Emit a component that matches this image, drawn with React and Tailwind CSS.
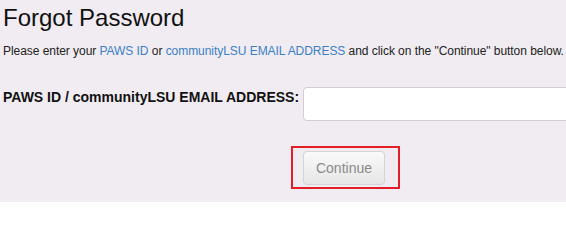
import React from 'react';

export default function App() {
  return (
    <div className="w-[566px] h-[202px] overflow-hidden bg-[#f0ecf1] text-[#222] font-['Liberation_Sans',Arial,sans-serif]">
      <div className="pl-[3px] pt-[4px]">
        <h1 className="text-[24px] leading-[28px] text-[#111]">Forgot Password</h1>
        <p className="mt-[12px] text-[12px] leading-[14px] whitespace-nowrap tracking-[-0.05px]">
          Please enter your <a href="#" className="text-[#3c7fc7]">PAWS ID</a> or{' '}
          <a href="#" className="text-[#3c7fc7]">communityLSU EMAIL ADDRESS</a> and click on the "Continue" button below.
        </p>
      </div>

      <div className="mt-[29px] flex items-start">
        <label className="w-[303px] shrink-0 pl-[3px] pt-[2px] text-[14px] leading-[16px] font-bold text-[#111]">
          PAWS ID / communityLSU EMAIL ADDRESS:
        </label>
        <input
          type="text"
          className="w-[300px] h-[34px] shrink-0 rounded-[4px] border border-[#cfcfcf] bg-white"
        />
      </div>

      <div className="mt-[25px] flex">
        <div className="w-[291px] shrink-0" />
        <div className="border-2 border-[#e31e26] pl-[10px] pr-[13px] pt-[3px] pb-[2px]">
          <button
            type="button"
            className="w-[82px] h-[34px] rounded-[4px] border border-[#d4d4d4] bg-gradient-to-b from-[#fafafa] to-[#e6e6e6] text-[14px] text-[#8a8a8a]"
          >
            Continue
          </button>
        </div>
      </div>
    </div>
  );
}
